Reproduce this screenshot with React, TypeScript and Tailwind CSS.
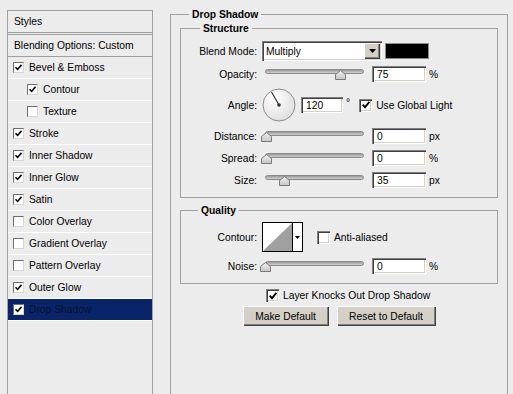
const styleItems = [
  { label: "Bevel & Emboss", checked: true },
  { label: "Contour", checked: true, sub: true },
  { label: "Texture", checked: false, sub: true },
  { label: "Stroke", checked: true },
  { label: "Inner Shadow", checked: true },
  { label: "Inner Glow", checked: true },
  { label: "Satin", checked: true },
  { label: "Color Overlay", checked: false },
  { label: "Gradient Overlay", checked: false },
  { label: "Pattern Overlay", checked: false },
  { label: "Outer Glow", checked: true },
  { label: "Drop Shadow", checked: true, active: true },
]

const sunken =
  "bg-white shadow-[inset_1px_1px_0_#808080,inset_2px_2px_0_#404040,inset_-1px_-1px_0_#ffffff,inset_-2px_-2px_0_#d4d0c8]"
const raised =
  "bg-[#D4D0C8] shadow-[inset_1px_1px_0_#ffffff,inset_-1px_-1px_0_#404040,inset_-2px_-2px_0_#808080]"

const SmallCheck = ({ checked }: { checked: boolean }) => (
  <div className="w-[11px] h-[11px] shrink-0 bg-white border border-t-[#6f6f6f] border-l-[#6f6f6f] border-r-[#d6d6d6] border-b-[#d6d6d6] flex items-center justify-center">
    {checked && (
      <svg width="7" height="7" viewBox="0 0 7 7">
        <path d="M0.5 3.2 L2.6 5.4 L6.5 0.8" fill="none" stroke="#000" strokeWidth="1.6" />
      </svg>
    )}
  </div>
)

const Check = ({ checked }: { checked: boolean }) => (
  <div className={`w-[13px] h-[13px] shrink-0 flex items-center justify-center ${sunken}`}>
    {checked && (
      <svg width="8" height="8" viewBox="0 0 8 8">
        <path d="M0.6 3.6 L3 6.2 L7.4 0.8" fill="none" stroke="#000" strokeWidth="1.9" />
      </svg>
    )}
  </div>
)

const Slider = ({ thumb }: { thumb: string }) => (
  <div className="relative w-[99px] h-[16px] ml-[8px] shrink-0">
    <div className="absolute top-[3px] left-0 w-full h-[5px] rounded-full border border-[#8a8a8a] bg-gradient-to-b from-[#9a9a9a] to-[#d0d0d0]" />
    <svg className={`absolute top-[4px] ${thumb}`} width="11" height="10" viewBox="0 0 11 10">
      <defs>
        <linearGradient id="tg" x1="0" y1="0" x2="0" y2="1">
          <stop offset="0" stopColor="#f4f4f4" />
          <stop offset="1" stopColor="#c4c4c4" />
        </linearGradient>
      </defs>
      <polygon points="0.5,9.5 0.5,4.5 5.5,0.5 10.5,4.5 10.5,9.5" fill="url(#tg)" stroke="#7a7a7a" />
    </svg>
  </div>
)

const Field = ({ value, w = "w-[54px]" }: { value: string; w?: string }) => (
  <input
    readOnly
    value={value}
    className={`${w} h-[16px] shrink-0 pl-[5px] pr-[2px] text-[10.3px] text-black outline-none ${sunken}`}
  />
)

const Label = ({ children }: { children: string }) => (
  <div className="w-[76px] shrink-0 text-right">{children}</div>
)

const SliderRow = ({ label, thumb, value, unit, mt }: { label: string; thumb: string; value: string; unit: string; mt: string }) => (
  <div className={`flex items-center h-[16px] ${mt}`}>
    <Label>{label}</Label>
    <Slider thumb={thumb} />
    <div className="ml-[8px]">
      <Field value={value} />
    </div>
    <span className="ml-[3px]">{unit}</span>
  </div>
)

export default function App() {
  return (
    <div className="w-[513px] h-[394px] overflow-hidden bg-[#ECECEC] flex font-['Liberation_Sans',Arial,sans-serif] text-[10.3px] text-black leading-[13px]">
      {/* styles list */}
      <div className="pl-[7px] pt-[10px] shrink-0">
        <div className="w-[146px] h-[400px] border border-[#A0A0A0] flex flex-col">
          <div className="h-[21px] pl-[6px] flex items-center">Styles</div>
          <div className="h-[3px] border-y border-[#A0A0A0]" />
          <div className="h-[22px] pl-[6px] flex items-center border-b border-[#A0A0A0]">Blending Options: Custom</div>
          {styleItems.map((s) => (
            <div
              key={s.label}
              className={`h-[22px] flex items-center gap-[5px] border-b border-white ${s.sub ? "pl-[19px]" : "pl-[5px]"} ${s.active ? "bg-[#0A246A]" : ""}`}
            >
              <SmallCheck checked={s.checked} />
              <span className={s.active ? "text-[#050f30]" : ""}>{s.label}</span>
            </div>
          ))}
        </div>
      </div>

      {/* drop shadow panel */}
      <div className="ml-[17px] mt-[14px] w-[338px] h-[400px] shrink-0 border border-[#A0A0A0] flex flex-col">
        <div className="-mt-[7px] ml-[18px] px-[3px] self-start bg-[#ECECEC] font-bold">Drop Shadow</div>

        {/* structure */}
        <div className="mt-[7px] ml-[9px] w-[318px] border border-[#A0A0A0] flex flex-col pb-[9px]">
          <div className="-mt-[7px] ml-[19px] px-[3px] self-start bg-[#ECECEC] font-bold">Structure</div>

          <div className="mt-[6px] flex items-center h-[20px]">
            <Label>Blend Mode:</Label>
            <div className={`ml-[5px] w-[120px] h-[20px] p-[2px] flex ${sunken}`}>
              <div className="flex-1 pl-[2px] flex items-center">Multiply</div>
              <div className={`w-[16px] h-[16px] flex items-center justify-center ${raised}`}>
                <svg width="7" height="4" viewBox="0 0 7 4">
                  <polygon points="0,0 7,0 3.5,4" fill="#000" />
                </svg>
              </div>
            </div>
            <div className="ml-[3px] w-[44px] h-[16px] bg-black border border-[#8a8a8a]" />
          </div>

          <SliderRow label="Opacity:" thumb="left-[70px]" value="75" unit="%" mt="mt-[5px]" />

          <div className="mt-[6px] flex items-center h-[34px]">
            <Label>Angle:</Label>
            <svg className="ml-[5px] shrink-0" width="34" height="34" viewBox="0 0 34 34">
              <defs>
                <radialGradient id="dial" cx="0.35" cy="0.3" r="0.8">
                  <stop offset="0" stopColor="#ffffff" />
                  <stop offset="1" stopColor="#dcdcdc" />
                </radialGradient>
              </defs>
              <circle cx="17" cy="17" r="16" fill="url(#dial)" stroke="#8c8c8c" />
              <line x1="17" y1="17" x2="9.5" y2="4" stroke="#333" strokeWidth="1.2" />
              <circle cx="17" cy="17" r="1.8" fill="#333" />
            </svg>
            <div className="ml-[5px]">
              <Field value="120" w="w-[42px]" />
            </div>
            <span className="ml-[3px] -mt-[5px]">°</span>
            <div className="ml-[9px]">
              <Check checked />
            </div>
            <span className="ml-[4px]">Use Global Light</span>
          </div>

          <SliderRow label="Distance:" thumb="-left-[4px]" value="0" unit="px" mt="mt-[6px]" />
          <SliderRow label="Spread:" thumb="-left-[4px]" value="0" unit="%" mt="mt-[6px]" />
          <SliderRow label="Size:" thumb="left-[14px]" value="35" unit="px" mt="mt-[6px]" />
        </div>

        {/* quality */}
        <div className="mt-[12px] ml-[9px] w-[318px] border border-[#A0A0A0] flex flex-col pb-[9px]">
          <div className="-mt-[7px] ml-[17px] px-[3px] self-start bg-[#ECECEC] font-bold">Quality</div>

          <div className="mt-[5px] flex items-center h-[30px]">
            <Label>Contour:</Label>
            <div className="ml-[5px] w-[41px] h-[30px] border border-black bg-white flex">
              <svg width="29" height="28" viewBox="0 0 29 28" className="shrink-0">
                <polygon points="0,28 29,0 29,28" fill="#a0a0a0" />
              </svg>
              <div className="flex-1 border-l border-black flex items-center justify-center">
                <svg width="5" height="3" viewBox="0 0 5 3">
                  <polygon points="0,0 5,0 2.5,3" fill="#000" />
                </svg>
              </div>
            </div>
            <div className="ml-[14px]">
              <Check checked={false} />
            </div>
            <span className="ml-[4px]">Anti-aliased</span>
          </div>

          <SliderRow label="Noise:" thumb="-left-[5px]" value="0" unit="%" mt="mt-[6px]" />
        </div>

        <div className="mt-[5px] ml-[95px] flex items-center h-[13px]">
          <Check checked />
          <span className="ml-[4px]">Layer Knocks Out Drop Shadow</span>
        </div>

        <div className="mt-[4px] flex justify-center gap-[8px]">
          <button className={`w-[86px] h-[20px] text-[10.3px] ${raised}`}>Make Default</button>
          <button className={`w-[99px] h-[20px] text-[10.3px] ${raised}`}>Reset to Default</button>
        </div>
      </div>
    </div>
  )
}
